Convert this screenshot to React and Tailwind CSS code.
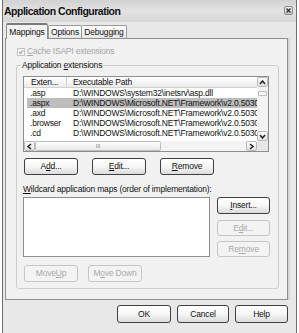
import React from 'react';

// Botón estilo XP (en gris)
function Btn({ children, className = '', disabled = false }) {
  return (
    <div
      className={
        'flex items-center justify-center rounded-[3px] border leading-none ' +
        (disabled
          ? 'border-[#c6c6c6] bg-[#f3f3f3] text-[#a9a9a9] '
          : 'border-[#3f3f3f] bg-gradient-to-b from-white via-[#f6f6f6] to-[#dcdcdc] text-[#111] ') +
        className
      }
    >
      {children}
    </div>
  );
}

function Arrow({ dir }) {
  const paths = {
    up: 'M2 6 L4.5 3 L7 6',
    down: 'M2 3 L4.5 6 L7 3',
    left: 'M6 2 L3 4.5 L6 7',
    right: 'M3 2 L6 4.5 L3 7',
  };
  return (
    <svg width="9" height="9" viewBox="0 0 9 9">
      <path d={paths[dir]} fill="none" stroke="#2a2a2a" strokeWidth="1.6" />
    </svg>
  );
}

function ScrollBtn({ dir }) {
  return (
    <div className="flex h-[10px] w-[11px] items-center justify-center rounded-[2px] border border-[#b9b9b9] bg-gradient-to-b from-white to-[#e2e2e2]">
      <Arrow dir={dir} />
    </div>
  );
}

const filas = [
  { ext: '.asp', path: 'D:\\WINDOWS\\system32\\inetsrv\\asp.dll' },
  { ext: '.aspx', path: 'D:\\WINDOWS\\Microsoft.NET\\Framework\\v2.0.50309', sel: true },
  { ext: '.axd', path: 'D:\\WINDOWS\\Microsoft.NET\\Framework\\v2.0.50309' },
  { ext: '.browser', path: 'D:\\WINDOWS\\Microsoft.NET\\Framework\\v2.0.50309' },
  { ext: '.cd', path: 'D:\\WINDOWS\\Microsoft.NET\\Framework\\v2.0.50309' },
];

export default function App() {
  return (
    <div
      className="h-[333px] w-[299px] overflow-hidden bg-white text-[8.5px] tracking-[-0.2px] text-[#111]"
      style={{ fontFamily: '"Liberation Sans", Arial, sans-serif' }}
    >
      <div className="ml-[2px] flex h-full w-[295px] flex-col border-l border-r border-[#6f6f6f] bg-[#e8e8e8]">
        {/* Barra de título */}
        <div className="flex h-[22px] shrink-0 items-center justify-between bg-gradient-to-b from-[#d2d2d2] via-[#e3e3e3] to-[#d6d6d6] pl-[1px] pr-[3px]">
          <span className="pt-[2px] text-[10.5px] font-bold tracking-[-0.5px] text-[#111]">
            Application Configuration
          </span>
          <div className="mb-[2px] flex h-[9px] w-[9px] items-center justify-center rounded-[2px] border border-[#8a8a8a] bg-gradient-to-b from-[#f4f4f4] to-[#c8c8c8]">
            <svg width="7" height="7" viewBox="0 0 7 7">
              <path d="M1.5 1.5 L5.5 5.5 M5.5 1.5 L1.5 5.5" stroke="#333" strokeWidth="1.4" />
            </svg>
          </div>
        </div>

        {/* Pestañas */}
        <div className="relative z-10 ml-[3px] mt-[1px] flex h-[15px] items-end">
          <div className="mb-[-1px] flex h-[16px] w-[42px] items-center justify-center rounded-t-[2px] border border-b-0 border-[#8f8f8f] border-t-[2px] border-t-[#7a7a7a] bg-[#f2f2f2]">
            Mappings
          </div>
          <div className="flex h-[13px] w-[34px] items-center justify-center rounded-t-[2px] border border-b-0 border-[#9a9a9a] bg-gradient-to-b from-white to-[#e6e6e6]">
            Options
          </div>
          <div className="flex h-[13px] w-[45px] items-center justify-center rounded-t-[2px] border border-b-0 border-l-0 border-[#9a9a9a] bg-gradient-to-b from-white to-[#e6e6e6]">
            Debugging
          </div>
        </div>

        {/* Panel de la pestaña */}
        <div className="ml-[2px] h-[262px] w-[283px] border border-[#8f8f8f] bg-[#f1f1f1] shadow-[2px_0_0_#d6d6d6]">
          <div className="ml-[11px] mt-[8px] flex items-center gap-[2px] text-[#a6a6a6]">
            <div className="flex h-[8px] w-[8px] items-center justify-center border border-[#c2c2c2] bg-[#f4f4f4]">
              <svg width="6" height="6" viewBox="0 0 6 6">
                <path d="M1 3 L2.5 4.5 L5 1.5" fill="none" stroke="#b0b0b0" strokeWidth="1.2" />
              </svg>
            </div>
            <span className="leading-[9px]">
              <u>C</u>ache ISAPI extensions
            </span>
          </div>

          <fieldset className="ml-[10px] mt-[4px] w-[263px] rounded-[3px] border border-[#cdcdcd] px-[6px] pb-[6px]">
            <legend className="ml-[-2px] px-[1px] leading-[10px]">
              Application <u>e</u>xtensions
            </legend>

            {/* Lista de extensiones */}
            <div className="mt-[6px] flex h-[76px] w-[246px] flex-col border border-[#8e8e8e] bg-white">
              <div className="flex h-[64px]">
                <div className="w-[233px] overflow-hidden">
                  <div className="flex h-[11px] border-b border-[#d2d2d2] bg-gradient-to-b from-white to-[#ebebeb] leading-[10px]">
                    <div className="w-[43px] border-r border-[#cfcfcf] pl-[7px]">Exten...</div>
                    <div className="pl-[6px]">Executable Path</div>
                  </div>
                  {filas.map((f) => (
                    <div key={f.ext} className="flex h-[10px] pl-[3px] leading-[10px]">
                      <div className={'flex w-full ' + (f.sel ? 'bg-[#bdbdbd]' : '')}>
                        <div className="w-[40px] shrink-0 pl-[3px]">{f.ext}</div>
                        <div className="overflow-hidden whitespace-nowrap pl-[6px]">{f.path}</div>
                      </div>
                    </div>
                  ))}
                </div>
                <div className="flex w-[11px] flex-col justify-between bg-[#f3f3f3]">
                  <ScrollBtn dir="up" />
                  <div className="relative flex-1">
                    <div className="mx-[1px] mt-[4px] h-[5px] rounded-[1px] border border-[#bdbdbd] bg-[#f8f8f8]" />
                  </div>
                  <ScrollBtn dir="down" />
                </div>
              </div>
              <div className="flex h-[10px]">
                <div className="flex w-[233px] bg-[#f3f3f3]">
                  <ScrollBtn dir="left" />
                  <div className="flex w-[126px] items-center justify-center rounded-[2px] border border-[#bdbdbd] bg-gradient-to-b from-white to-[#e8e8e8] text-[6px] leading-none text-[#8a8a8a]">
                    III
                  </div>
                  <div className="flex-1" />
                  <ScrollBtn dir="right" />
                </div>
                <div className="w-[11px] bg-[#e6e6e6]" />
              </div>
            </div>

            <div className="ml-[1px] mt-[6px] flex gap-[14px]">
              <Btn className="h-[17px] w-[54px]">
                A<u>d</u>d...
              </Btn>
              <Btn className="h-[17px] w-[54px]">
                <u>E</u>dit...
              </Btn>
              <Btn className="h-[17px] w-[54px]">
                <u>R</u>emove
              </Btn>
            </div>

            <div className="mt-[9px] leading-[10px]">
              <u>W</u>ildcard application maps (order of implementation):
            </div>

            <div className="mt-[3px] flex gap-[7px]">
              <div className="h-[60px] w-[187px] border border-[#8e8e8e] bg-white" />
              <div className="flex w-[53px] flex-col">
                <Btn className="h-[17px]">
                  <u>I</u>nsert...
                </Btn>
                <Btn disabled className="mt-[6px] h-[16px]">
                  E<u>d</u>it...
                </Btn>
                <Btn disabled className="mt-[5px] h-[16px]">
                  Re<u>m</u>ove
                </Btn>
              </div>
            </div>

            <div className="ml-[1px] mt-[8px] flex gap-[10px]">
              <Btn disabled className="h-[17px] w-[54px]">
                Move <u>U</u>p
              </Btn>
              <Btn disabled className="h-[17px] w-[54px]">
                M<u>o</u>ve Down
              </Btn>
            </div>
          </fieldset>
        </div>

        {/* Botones inferiores */}
        <div className="mt-[5px] flex w-[285px] justify-end gap-[6px]">
          <Btn className="h-[18px] w-[54px]">OK</Btn>
          <Btn className="h-[18px] w-[52px]">Cancel</Btn>
          <Btn className="h-[18px] w-[53px]">Help</Btn>
        </div>
      </div>
    </div>
  );
}
